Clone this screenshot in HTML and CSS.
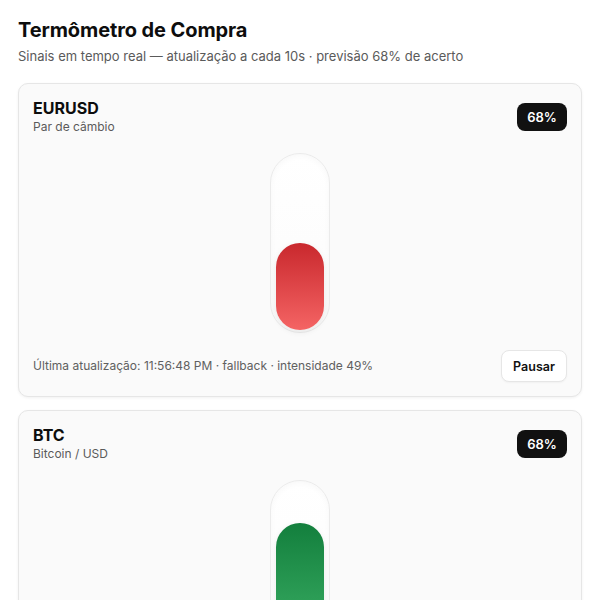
FILE: index.html
```html
<!DOCTYPE html>
<html lang="pt-BR">
<head>
<meta charset="utf-8">
<title>Termômetro de Compra</title>
<link rel="stylesheet" href="styles.css">
</head>
<body>
<main class="page">
  <header class="page-head">
    <h1 class="title">Termômetro de Compra</h1>
    <p class="subtitle">Sinais em tempo real — atualização a cada 10s · previsão 68% de acerto</p>
  </header>

  <section class="card">
    <div class="card-head">
      <div>
        <div class="asset">EURUSD</div>
        <div class="asset-sub">Par de câmbio</div>
      </div>
      <span class="badge">68%</span>
    </div>
    <div class="gauge">
      <div class="tube">
        <div class="fill fill-red" style="height: 87px"></div>
      </div>
    </div>
    <div class="card-foot">
      <span class="meta">Última atualização: 11:56:48 PM · fallback · intensidade 49%</span>
      <button class="btn">Pausar</button>
    </div>
  </section>

  <section class="card">
    <div class="card-head">
      <div>
        <div class="asset">BTC</div>
        <div class="asset-sub">Bitcoin / USD</div>
      </div>
      <span class="badge">68%</span>
    </div>
    <div class="gauge">
      <div class="tube">
        <div class="fill fill-green" style="height: 134px"></div>
      </div>
    </div>
    <div class="card-foot">
      <span class="meta">Última atualização: 11:56:48 PM · fallback · intensidade 75%</span>
      <button class="btn">Pausar</button>
    </div>
  </section>
</main>
</body>
</html>
```

FILE: styles.css
```css
* { box-sizing: border-box; }

html, body {
  margin: 0;
  padding: 0;
  background: #ffffff;
  font-family: Inter, "Noto Sans", "Liberation Sans", sans-serif;
  color: #111111;
}

.page {
  padding: 16px 18px 18px 18px;
  display: flex;
  flex-direction: column;
}

.page-head {
  margin-bottom: 17px;
}

.title {
  margin: 0;
  font-size: 20px;
  line-height: 28px;
  font-weight: 700;
  letter-spacing: -0.1px;
  color: #0d0d0d;
}

.subtitle {
  margin: 2px 0 0 0;
  font-size: 13px;
  line-height: 20px;
  color: #5a5a5a;
}

.card {
  background: #fafafa;
  border: 1px solid #e6e6e6;
  border-radius: 10px;
  box-shadow: 0 1px 3px rgba(0, 0, 0, 0.06);
  padding: 14px;
  margin-bottom: 13px;
  display: flex;
  flex-direction: column;
}

.card-head {
  display: flex;
  justify-content: space-between;
  align-items: center;
}

.asset {
  font-size: 16px;
  line-height: 20px;
  font-weight: 700;
  color: #0d0d0d;
}

.asset-sub {
  font-size: 12px;
  line-height: 18px;
  color: #5a5a5a;
}

.badge {
  display: inline-flex;
  align-items: center;
  justify-content: center;
  width: 50px;
  height: 28px;
  border-radius: 8px;
  background: #111111;
  color: #ffffff;
  font-size: 13px;
  font-weight: 600;
}

.gauge {
  display: flex;
  justify-content: center;
  margin-top: 17px;
}

.tube {
  position: relative;
  width: 60px;
  height: 180px;
  border-radius: 30px;
  border: 1px solid #ebebeb;
  background: linear-gradient(180deg, #ffffff 0%, #fbfbfb 100%);
  box-shadow: inset 0 2px 6px rgba(0, 0, 0, 0.03);
}

.fill {
  position: absolute;
  left: 5px;
  right: 5px;
  bottom: 2px;
  border-radius: 24px;
  box-shadow: 0 2px 6px rgba(0, 0, 0, 0.08);
}

.fill-red {
  background: linear-gradient(180deg, #c9282d 0%, #f46464 100%);
}

.fill-green {
  background: linear-gradient(180deg, #137f3d 0%, #3fb469 100%);
}

.card-foot {
  display: flex;
  justify-content: space-between;
  align-items: center;
  margin-top: 17px;
}

.meta {
  font-size: 12px;
  line-height: 18px;
  color: #606060;
}

.btn {
  height: 32px;
  width: 66px;
  padding: 0;
  border: 1px solid #e6e6e6;
  border-radius: 8px;
  background: #ffffff;
  font-family: Inter, "Noto Sans", "Liberation Sans", sans-serif;
  font-size: 12.5px;
  font-weight: 600;
  color: #111111;
  box-shadow: 0 1px 2px rgba(0, 0, 0, 0.04);
}
```
